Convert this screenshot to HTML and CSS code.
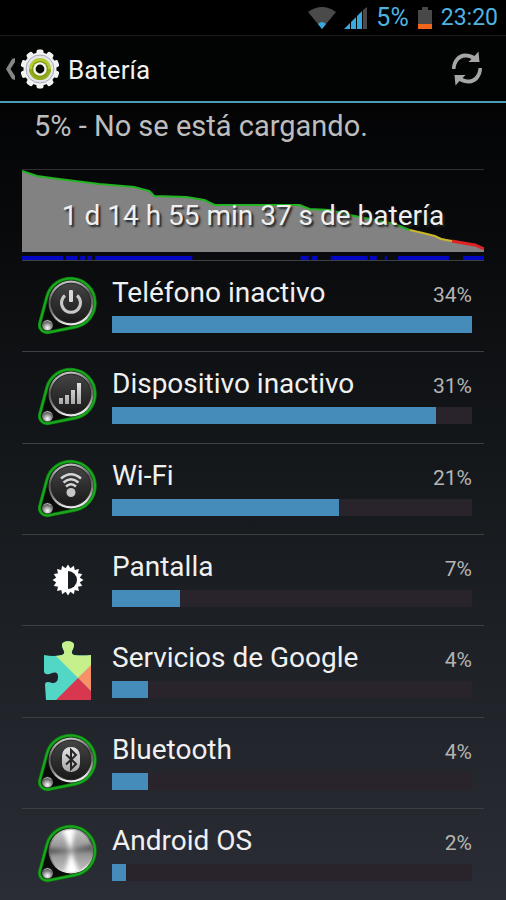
FILE: index.html
```html
<!DOCTYPE html>
<html lang="es">
<head>
  <meta charset="UTF-8" />
  <title>Batería</title>
  <meta name="viewport" content="width=device-width, initial-scale=1" />
  <link rel="stylesheet" href="styles.css">
</head>
<body>

  <!-- Formas compartidas por los iconos -->
  <svg class="defs" width="0" height="0" aria-hidden="true">
    <defs>
      <linearGradient id="ring" x1="0" y1="0" x2="0.2" y2="1">
        <stop offset="0" stop-color="#e2e2e2" />
        <stop offset="0.45" stop-color="#555" />
        <stop offset="0.7" stop-color="#777" />
        <stop offset="1" stop-color="#e8e8e8" />
      </linearGradient>
      <linearGradient id="face" x1="0" y1="0" x2="0" y2="1">
        <stop offset="0" stop-color="#454545" />
        <stop offset="0.5" stop-color="#2e2e2e" />
        <stop offset="1" stop-color="#191919" />
      </linearGradient>
      <linearGradient id="glyph" x1="0" y1="0" x2="0" y2="1">
        <stop offset="0" stop-color="#e4e4e4" />
        <stop offset="1" stop-color="#a8a8a8" />
      </linearGradient>
      <linearGradient id="metal" x1="0" y1="0" x2="0" y2="1">
        <stop offset="0" stop-color="#c8c8c8" />
        <stop offset="0.5" stop-color="#8c8c8c" />
        <stop offset="1" stop-color="#c8c8c8" />
      </linearGradient>
      <radialGradient id="ball" cx="0.5" cy="0.75" r="0.7">
        <stop offset="0" stop-color="#fff" />
        <stop offset="0.5" stop-color="#999" />
        <stop offset="1" stop-color="#333" />
      </radialGradient>
      <filter id="soft"><feGaussianBlur stdDeviation="2" /></filter>
      <clipPath id="disc"><circle cx="33" cy="27" r="21" /></clipPath>
      <symbol id="dial" viewBox="0 0 60 60">
        <path d="M8.9 20.7A24.5 24.5 0 1 1 37.3 51L10.5 56.4A7.5 7.5 0 0 1 1.8 47.1Z" fill="#0a0c0a" stroke="#0a7a0e" stroke-width="3.4" />
        <path d="M8.9 20.7A24.5 24.5 0 1 1 37.3 51L10.5 56.4A7.5 7.5 0 0 1 1.8 47.1Z" fill="none" stroke="#1aa81e" stroke-width="2" />
        <circle cx="33" cy="27" r="22.5" fill="url(#ring)" />
        <circle cx="33" cy="27" r="19.8" fill="url(#face)" stroke="#222" />
        <circle cx="9.5" cy="49" r="5.6" fill="url(#ball)" />
        <path d="M5 47A5 5 0 0 1 14 47Q9 43 5 47Z" fill="#ddd" />
      </symbol>
    </defs>
  </svg>

  <div class="statusbar">
    <svg width="28" height="22" viewBox="0 0 28 22" aria-hidden="true">
      <path d="M0 5Q14-5 28 5L14 22Z" fill="#4a4a4a" />
      <path d="M10 17Q14 13 18 17L14 22Z" fill="#36a9df" />
    </svg>
    <svg width="24" height="22" viewBox="0 0 24 22" aria-hidden="true">
      <path d="M0 22L6 16V22ZM7 22V15L12 10V22ZM13 22V9L18 4V22Z" fill="#36a9df" />
      <path d="M19 22V3L23 0V22Z" fill="#4a4a4a" />
    </svg>
    <span class="level">5%</span>
    <svg width="16" height="22" viewBox="0 0 16 22" aria-hidden="true">
      <path d="M5 0H11V3H15V17H1V3H5Z" fill="#484848" />
      <path d="M1 17H15V22H1Z" fill="#f2651c" />
    </svg>
    <span class="clock">23:20</span>
  </div>

  <header class="actionbar">
    <a class="home" href="#" aria-label="Volver a Ajustes">
      <svg width="10" height="22" viewBox="0 0 10 22">
        <path d="M10 0V4L5.5 11L10 18V22L7 21L1 11L7 1Z" fill="#858585" />
      </svg>
      <svg width="40" height="40" viewBox="-20 -20 40 40">
        <g fill="#f2f2f2">
          <circle r="16.5" />
          <rect x="-3.5" y="-19.5" width="7" height="39" rx="2" />
          <rect x="-3.5" y="-19.5" width="7" height="39" rx="2" transform="rotate(36)" />
          <rect x="-3.5" y="-19.5" width="7" height="39" rx="2" transform="rotate(72)" />
          <rect x="-3.5" y="-19.5" width="7" height="39" rx="2" transform="rotate(108)" />
          <rect x="-3.5" y="-19.5" width="7" height="39" rx="2" transform="rotate(144)" />
        </g>
        <circle r="14" fill="#e4e4ec" stroke="#a9a9b8" />
        <circle r="11" fill="#b4cc32" />
        <path d="M-11 0A11 11 0 0 0 11 0Z" fill="#93aa1c" />
        <circle r="8" fill="#7d9412" />
        <circle r="6.8" fill="#f4f6ea" />
        <circle r="4.4" fill="#0b0b0b" />
      </svg>
    </a>
    <h1>Batería</h1>
    <button class="refresh" type="button" aria-label="Actualizar">
      <svg width="32" height="35" viewBox="0 0 32 35">
        <g id="arrow" fill="#a6a6a6">
          <path d="M1 18C1 9 7 2.5 14 2.5C18 2.5 21 3.5 23.5 5L27.5 0.5L28.5 11H17.5L20.500 8C18 6.500 16 6.500 14 6.500C9 7 5 11 4.500 18Z" />
        </g>
        <use href="#arrow" transform="rotate(180 16 17.5)" />
      </svg>
    </button>
  </header>

  <main>
    <p class="status">5% - No se está cargando.</p>

    <section class="history">
      <svg class="chart" viewBox="0 0 461 82" preserveAspectRatio="none" aria-hidden="true">
        <path d="M0 1L15 6L37 9L61 12L77 14L112 17L123 20L127 21L132 26L164 27L182 30L192 35H277L287 39L307 40L327 45L357 51L372 54L387 60L412 66L429 71L452 75L461 79V82H0Z" fill="#828282" />
        <g fill="none" stroke-width="2">
          <path d="M0 1L15 6L37 9L61 12L77 14L112 17L123 20L127 21L132 26L164 27L182 30L192 35H277L287 39L307 40L327 45L357 51L372 54L387 60" stroke="#22b422" />
          <path d="M387 60L400 63L412 66L418 69L429 71" stroke="#c9b62a" />
          <path d="M429 71L440 73L452 75L461 79" stroke="#dd2424" stroke-width="3" />
        </g>
      </svg>
      <p class="elapsed">1 d 14 h 55 min 37 s de batería</p>
      <svg class="activity" viewBox="0 0 461 4" preserveAspectRatio="none" aria-hidden="true">
        <path d="M0 0H41V4H0ZM44 0H55V4H44ZM58 0H63V4H58ZM65 0H70V4H65ZM73 0H170V4H73ZM278 0H286V4H278ZM289 0H295V4H289ZM308 0H345V4H308ZM347 0H354V4H347ZM362 0H364V4H362ZM375 0H426V4H375ZM440 0H461V4H440Z" fill="#0505c4" />
      </svg>
    </section>

    <ul class="usage">
      <li>
        <svg class="icon" viewBox="0 0 60 60" aria-hidden="true">
          <use href="#dial" />
          <path d="M27 19.5A9.5 9.5 0 1 0 39 19.5" fill="none" stroke="#c8c8c8" stroke-width="3" />
          <rect x="31" y="14" width="4" height="12" rx="1" fill="#d8d8d8" />
        </svg>
        <div class="info">
          <div class="line"><span class="name">Teléfono inactivo</span><span class="percent">34%</span></div>
          <div class="bar"><div class="fill" style="width: 100%"></div></div>
        </div>
      </li>
      <li>
        <svg class="icon" viewBox="0 0 60 60" aria-hidden="true">
          <use href="#dial" />
          <path d="M21 31H25V37H21ZM27 28H31V37H27ZM33 23H37V37H33ZM39 16H43V37H39Z" fill="url(#glyph)" />
        </svg>
        <div class="info">
          <div class="line"><span class="name">Dispositivo inactivo</span><span class="percent">31%</span></div>
          <div class="bar"><div class="fill" style="width: 90%"></div></div>
        </div>
      </li>
      <li>
        <svg class="icon" viewBox="0 0 60 60" aria-hidden="true">
          <use href="#dial" />
          <g fill="none" stroke="#d6d6d6" stroke-width="2.5">
            <path d="M23 19.5Q33 11 43 19.5" />
            <path d="M25.5 23.5Q33 17 40.5 23.5" />
            <path d="M28 27.5Q33 23 38 27.5" />
          </g>
          <circle cx="33" cy="33.5" r="4.5" fill="#c6c6c6" />
        </svg>
        <div class="info">
          <div class="line"><span class="name">Wi-Fi</span><span class="percent">21%</span></div>
          <div class="bar"><div class="fill" style="width: 63%"></div></div>
        </div>
      </li>
      <li>
        <svg class="icon" viewBox="0 0 60 60" aria-hidden="true">
          <g transform="translate(30 30)">
            <g fill="#fff">
              <path id="ray" d="M-3.5-10L0-15.5L3.5-10V10L0 15.5L-3.5 10Z" />
              <use href="#ray" transform="rotate(22.5)" />
              <use href="#ray" transform="rotate(45)" />
              <use href="#ray" transform="rotate(67.5)" />
              <use href="#ray" transform="rotate(90)" />
              <use href="#ray" transform="rotate(112.5)" />
              <use href="#ray" transform="rotate(135)" />
              <use href="#ray" transform="rotate(157.5)" />
              <circle r="11" />
            </g>
            <path d="M0-9A9 9 0 0 1 0 9Z" fill="#1a1d21" />
          </g>
        </svg>
        <div class="info">
          <div class="line"><span class="name">Pantalla</span><span class="percent">7%</span></div>
          <div class="bar"><div class="fill" style="width: 19%"></div></div>
        </div>
      </li>
      <li>
        <svg class="icon" viewBox="0 0 60 60" aria-hidden="true">
          <clipPath id="puzzle">
            <path d="M6 14Q16 16 24 14Q27 13 26 10C25 8 24 6 24 4C24-1 36-1 36 4C36 6 35 8 34 10Q33 13 36 14Q44 15 53 14V59H8L7 44C7 40 11 41 14 42C18 42 20 40 20 36C20 31 17 31 14 32C10 34 6 34 6 30Z" />
          </clipPath>
          <g clip-path="url(#puzzle)">
            <path d="M0 0H60V60H0Z" fill="#52d6c5" />
            <path d="M17 14V-2H60V18L40 37Z" fill="#c5f08c" />
            <path d="M40 37L54 23L60 17V57Z" fill="#f79268" />
            <path d="M40 37L18 59V62H60V57Z" fill="#d93750" />
          </g>
        </svg>
        <div class="info">
          <div class="line"><span class="name">Servicios de Google</span><span class="percent">4%</span></div>
          <div class="bar"><div class="fill" style="width: 10%"></div></div>
        </div>
      </li>
      <li>
        <svg class="icon" viewBox="0 0 60 60" aria-hidden="true">
          <use href="#dial" />
          <rect x="24" y="14" width="18" height="25" rx="8.5" fill="url(#glyph)" />
          <path d="M28 21.5L38 31L33 36V17L38 22L28 31.5" fill="none" stroke="#252525" stroke-width="2" />
        </svg>
        <div class="info">
          <div class="line"><span class="name">Bluetooth</span><span class="percent">4%</span></div>
          <div class="bar"><div class="fill" style="width: 10%"></div></div>
        </div>
      </li>
      <li>
        <svg class="icon" viewBox="0 0 60 60" aria-hidden="true">
          <use href="#dial" />
          <g clip-path="url(#disc)">
            <circle cx="33" cy="27" r="22" fill="url(#metal)" />
            <g filter="url(#soft)">
              <path d="M33 27L22 0H38ZM33 27L44 56H24Z" fill="#fff" />
              <path d="M33 27L4 23V31ZM33 27L62 18V27Z" fill="#5c5c5c" />
            </g>
          </g>
        </svg>
        <div class="info">
          <div class="line"><span class="name">Android OS</span><span class="percent">2%</span></div>
          <div class="bar"><div class="fill" style="width: 4%"></div></div>
        </div>
      </li>
    </ul>
  </main>

</body>
</html>
```
FILE: styles.css
```css
* {
  box-sizing: border-box;
}

body {
  font-family: Roboto, "Liberation Sans", sans-serif;
  margin: 0;
  min-height: 100vh;
  display: flex;
  flex-direction: column;
  background: linear-gradient(#000 0%, #08090b 25%, #14171a 50%, #2a2d35 100%);
  color: #f0f0f0;
}

h1, p, ul {
  margin: 0;
  padding: 0;
  font-weight: normal;
}

svg {
  display: block;
  flex-shrink: 0;
}

.defs {
  position: absolute;
}

.statusbar {
  display: flex;
  align-items: center;
  justify-content: flex-end;
  gap: 8px;
  height: 36px;
  padding: 0 8px;
  background: #000;
  border-bottom: 1px solid #1a1a1a;
  color: #4fb3e2;
  font-size: 23px;
}

.level {
  font-size: 25px;
}

.actionbar {
  display: flex;
  align-items: center;
  height: 67px;
  padding: 0 23px 0 5px;
  background: #020303;
  border-bottom: 2px solid #4b9db8;
}

.home {
  display: flex;
  align-items: center;
  gap: 5px;
}

h1 {
  flex: 1;
  margin-left: 8px;
  padding-top: 2px;
  font-size: 26px;
  line-height: 32px;
}

.refresh {
  padding: 0;
  border: none;
  background: none;
  cursor: pointer;
}

main {
  flex: 1;
  display: flex;
  flex-direction: column;
  padding: 0 22px;
}

.status {
  padding: 6px 12px 26px;
  color: #bdbdbd;
  font-size: 29px;
  line-height: 34px;
}

.history {
  position: relative;
  border-top: 1px solid #2e3032;
  border-bottom: 1px solid #3c3f43;
}

.chart {
  width: 100%;
  height: 82px;
}

/* Tiempo de uso, encima del gráfico */
.elapsed {
  position: absolute;
  top: 28px;
  left: 0;
  right: 0;
  text-align: center;
  font-size: 28px;
  line-height: 36px;
  text-shadow: 2px 2px 2px #222;
}

.activity {
  width: 100%;
  height: 4px;
  margin-top: 4px;
}

.usage {
  flex: 1;
  display: flex;
  flex-direction: column;
  list-style: none;
}

.usage li {
  flex: 1;
  display: flex;
  align-items: flex-start;
  gap: 14px;
  min-height: 91px;
  padding: 15px 12px 0 16px;
  border-bottom: 1px solid #3c3f43;
}

.usage li:last-child {
  border-bottom: none;
}

.icon {
  width: 60px;
  height: 60px;
}

.info {
  flex: 1;
}

.line {
  display: flex;
  justify-content: space-between;
  align-items: baseline;
  margin-bottom: 4px;
  line-height: 33px;
}

.name {
  font-size: 28px;
}

.percent {
  color: #b4b4b4;
  font-size: 21px;
}

.bar {
  height: 17px;
  background: #29242b;
}

.fill {
  height: 100%;
  background: #468cba;
}
```
